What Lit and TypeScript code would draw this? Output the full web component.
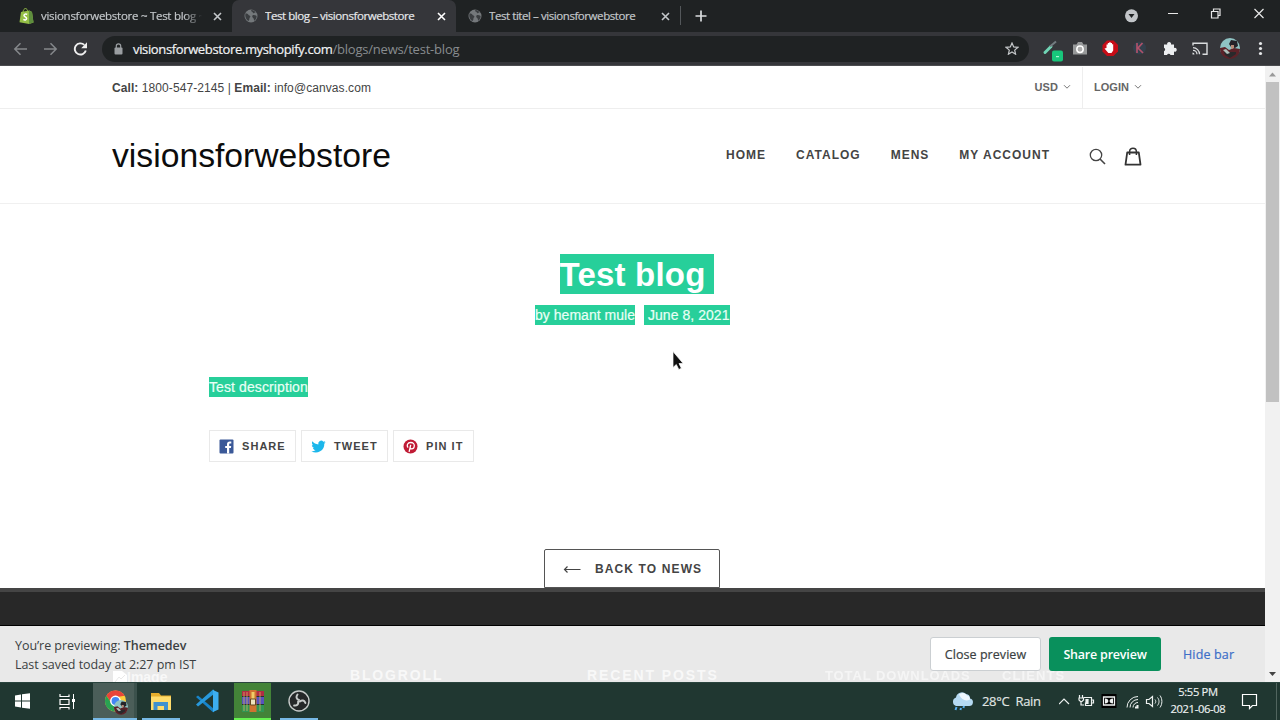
import { LitElement, html, css, svg } from "lit";
import { customElement } from "lit/decorators.js";

const globe = html`<svg class="ico" width="14" height="14" viewBox="0 0 14 14"><circle cx="7" cy="7" r="6.5" fill="#74787b"/><path d="M1.6 4.2c1.2.6 2.4.3 2.8 1.5.4 1.1 1.9.5 2 1.8.1 1-1.1 1.2-1 2.3.1.8-.4 1.5-.9 2.2C1.800 10.700.7 7.200 1.600 4.200zM7.500 1c-.8.8-.3 1.600.6 1.700.9.1.5 1.400 1.400 1.500 1 .1 1.200-.8 2.200-.6C10.700 2 9.300 1 7.500 1zM8.500 6.500c1.200-.8 2.700-.2 4.100.5.1 2-1 3.800-2.500 4.800-.2-1.200-.1-2-1-2.800-.8-.6-1.200-1.800-.6-2.500z" fill="#3a3d40"/></svg>`;
const close = (c: string) => html`<svg class="ico" width="9" height="9" viewBox="0 0 9 9"><path d="M1 1l7 7M8 1l-7 7" stroke=${c} stroke-width="1.6" fill="none"/></svg>`;
const chevron = html`<svg width="8" height="6" viewBox="0 0 8 6"><path d="M1 1.200l3 3 3-3" stroke="#777" fill="none"/></svg>`;
const avatar = svg`<circle cx="10" cy="10" r="10" fill="#8fc4c4"/><path d="M0 10l5-1 4 3 5-2 6 1a10 10 0 0 1-20 0z" fill="#5b2228"/><path d="M9 6l2-4 6 1 1 5-3 2-4-1z" fill="#252329"/><path d="M11 7h3v3l-3 1z" fill="#b98b78"/><path d="M4 14h12v2l-6 4-5-3z" fill="#29292b"/><path d="M3 12l4 4 3-1-4-4z" fill="#aebfb9"/>`;

@customElement("browser-chrome")
class BrowserChrome extends LitElement {
  static styles = css`
    :host { display: block; width: 1280px; font-family: "Open Sans", "Noto Sans", sans-serif; }
    svg { display: block; flex: none; }
    .tabs { height: 32px; background: #1f2223; display: flex; color: #c3c7ca; font-size: 11.5px; }
    .tab { display: flex; align-items: center; height: 32px; box-sizing: border-box; white-space: nowrap; }
    .first { width: 232px; padding-left: 19px; }
    .active { width: 224px; padding-left: 12px; background: #35363a; color: #e6e8ea; border-radius: 7px 7px 0 0; }
    .third { width: 224px; padding-left: 12px; }
    .label { margin-left: 7px; width: 163px; overflow: hidden; letter-spacing: -0.43px; -webkit-text-stroke: 0.2px; padding-bottom: 1px; }
    .active .label { width: 158px; }
    .active .ico:last-child { margin-left: 14px; }
    .third .label { width: 158px; }
    .third .ico:last-child { margin-left: 14px; }
    .fade { -webkit-mask-image: linear-gradient(90deg, #000 88%, transparent 99%); }
    .first .label { letter-spacing: -0.27px; }
    .first .ico:last-child { margin-left: 9px; }
    .sep { width: 1px; height: 19px; margin: 6px 14px 0 0; background: #53575a; }
    .plus { margin-top: 10px; }
    .win { margin-left: auto; display: flex; }
    .bar { height: 34px; background: #35363a; display: flex; align-items: center; border-bottom: 1px solid #4b4c4f; box-sizing: border-box; }
    .nav { width: 102px; display: flex; gap: 15px; padding-left: 13px; box-sizing: border-box; }
    .pill { width: 927px; height: 26px; border-radius: 13px; background: #1f2223; display: flex; align-items: center; font-size: 13px; color: #888c8f; padding: 0 10px 0 12px; box-sizing: border-box; }
    .url { margin-left: 10px; letter-spacing: -0.2px; flex: 1; white-space: nowrap; }
    .url b { font-weight: 400; color: #f1f2f3; -webkit-text-stroke: 0.2px; letter-spacing: -0.36px; }
    .ext { flex: 1; }
  `;
  render() {
    return html`
      <div class="tabs">
        <div class="tab first">
          <svg class="ico" width="15" height="16" viewBox="0 0 15 16"><path d="M2 4l8.500-1.500L13 4l1.500 10.500L10 16 .5 14.300z" fill="#95bf47"/><path d="M10 2.500L13 4l1.500 10.500L10 16z" fill="#5e8e3e"/><path d="M4 4c.3-2.200 1.400-3.500 2.500-3.500S8.500 1.800 8.600 3.500" stroke="#95bf47" fill="none"/><path d="M8.200 6.400C6.800 5.700 5 6 5 7.400c0 1.500 2.600 1.500 2.600 3.200 0 1.400-1.800 1.800-3.200.8" stroke="#fff" stroke-width="1.500" fill="none"/></svg>
          <span class="label fade">visionsforwebstore ~ Test blog ~</span>${close("#c3c7ca")}
        </div>
        <div class="tab active">${globe}<span class="label">Test blog – visionsforwebstore</span>${close("#fff")}</div>
        <div class="tab third">${globe}<span class="label">Test titel – visionsforwebstore</span>${close("#c3c7ca")}</div>
        <div class="sep"></div>
        <svg class="plus" width="12" height="12" viewBox="0 0 12 12"><path d="M6 .5v11M.5 6h11" stroke="#dadcde" stroke-width="1.700"/></svg>
        <svg class="win" width="156" height="32" viewBox="0 0 156 32" fill="none">
          <circle cx="7.500" cy="15.800" r="6.500" fill="#c2c5c8"/><path d="M4.500 14h6l-3 4z" fill="#1f2223"/>
          <path d="M44 13.500h10" stroke="#e8e8e8"/>
          <path d="M87.500 11.500h6.500v6.500h-6.500zM89.500 11.500v-2.500h6.500v6.500h-2" stroke="#e8e8e8" stroke-width="1.200"/>
          <path d="M130.500 9l9 9M139.500 9l-9 9" stroke="#e8e8e8" stroke-width="1.200"/>
        </svg>
      </div>
      <div class="bar">
        <div class="nav">
          <svg width="15" height="14" viewBox="0 0 15 14"><path d="M14 7H2M7.500 1.300L1.800 7l5.700 5.700" stroke="#85888b" stroke-width="1.500" fill="none"/></svg>
          <svg width="15" height="14" viewBox="0 0 15 14"><path d="M1 7h12M7.500 1.300L13.200 7l-5.700 5.700" stroke="#85888b" stroke-width="1.500" fill="none"/></svg>
          <svg width="15" height="14" viewBox="0 0 15 14"><path d="M12.800 8.500A5.600 5.600 0 1 1 11.300 2.900" stroke="#f0f0f0" stroke-width="1.900" fill="none"/><path d="M14 .3v6H8.200z" fill="#f0f0f0"/></svg>
        </div>
        <div class="pill">
          <svg width="9" height="12" viewBox="0 0 9 12"><rect x=".5" y="4.500" width="8" height="7" rx="1" fill="#9a9ea1"/><path d="M2.300 5V3a2.200 2.200 0 0 1 4.400 0v2" stroke="#9a9ea1" stroke-width="1.200" fill="none"/></svg>
          <span class="url"><b>visionsforwebstore.myshopify.com</b>/blogs/news/test-blog</span>
          <svg width="14" height="13" viewBox="0 0 14 13"><path d="M7 1l1.700 3.900 4.200.4-3.200 2.800.9 4.100L7 10l-3.600 2.200.9-4.100L1.100 5.300l4.200-.4z" stroke="#c5c8ca" stroke-width="1.200" fill="none"/></svg>
        </div>
        <svg class="ext" width="251" height="33" viewBox="0 0 251 33" preserveAspectRatio="xMinYMid">
          <path d="M16 20.500l6-6" stroke="#70d5b5" stroke-width="3" stroke-linecap="round"/><path d="M21 14.500l6-5" stroke="#737b80" stroke-width="2"/>
          <rect x="23" y="18.500" width="11" height="11" rx="2" fill="#18c67b"/><path d="M27 24.700h3" stroke="#caffe5"/>
          <path d="M44 12.500h3.500l1.500-2.500h4l1.500 2.500H58v10H44z" fill="#97999a"/><circle cx="51" cy="17.300" r="3.200" fill="#ababab" stroke="#fff" stroke-width="1.500"/>
          <path d="M78 8.500h6.500l4.500 4.500v6.500l-4.500 4.500H78l-4.500-4.500V13z" fill="#c70d17"/><path d="M77.500 16v-3.500h1.300V11h1.400v-.8h1.500v.8h1.300v1.200h1.200v6.300L82.500 21h-3.200l-3.800-4.500z" fill="#fff"/>
          <circle cx="110.500" cy="16" r="6.500" fill="#33404c"/><path d="M108 11v10M113.500 11l-4.500 5 5 5" stroke="#b0516a" stroke-width="1.700" fill="none"/>
          <path d="M135 12.500h3.200a2 2 0 1 1 3.800 0h3v3.400a2 2 0 1 1 0 3.700V23h-3.500a1.900 1.900 0 0 0-3.500 0h-3v-3.700a1.900 1.900 0 0 0 0-3.500z" fill="#eceef0"/>
          <path d="M164 13.500v-2.200h14v11h-4.500" stroke="#dadcde" stroke-width="1.400" fill="none"/><path d="M164 15.700a6.500 6.500 0 0 1 6.500 6.500M164 18.300a4 4 0 0 1 4 4" stroke="#dadcde" stroke-width="1.300" fill="none"/><path d="M163.500 20.500v2h2a2 2 0 0 0-2-2z" fill="#dadcde"/>
          <g transform="translate(191 6)">${avatar}</g>
          <g fill="#e5e7e9"><circle cx="231.500" cy="11.500" r="1.600"/><circle cx="231.500" cy="16.500" r="1.600"/><circle cx="231.500" cy="21.500" r="1.600"/></g>
        </svg>
      </div>`;
  }
}

@customElement("store-page")
class StorePage extends LitElement {
  static styles = css`
    :host { display: flex; height: 616px; width: 1280px; background: #fff; font-family: "Liberation Sans", Arial, sans-serif; color: #444; }
    svg { display: block; flex: none; }
    .page { width: 1265px; display: flex; flex-direction: column; }
    .top { height: 43px; padding: 1px 123px 0 112px; border-bottom: 1px solid #eee; box-sizing: border-box; display: flex; align-items: center; justify-content: space-between; font-size: 12px; letter-spacing: 0.08px; }
    .menus { display: flex; align-self: stretch; font: bold 11px "Liberation Sans", Arial, sans-serif; color: #666; letter-spacing: 0.05px; }
    .menus span { display: flex; align-items: center; gap: 5px; padding-bottom: 1px; }
    .menus span:first-child { padding-right: 11px; border-right: 1px solid #eee; margin-right: 11px; }
    .head { height: 95px; padding: 0 123px 0 112px; border-bottom: 1px solid #f0f0f0; box-sizing: border-box; display: flex; align-items: center; }
    .logo { font-size: 33.7px; color: #0c0c0c; flex: 1; padding-bottom: 2px; }
    .links { display: flex; gap: 30px; font-size: 12px; font-weight: bold; letter-spacing: 1px; padding-bottom: 2px; }
    .icons { display: flex; gap: 18px; align-items: center; margin: 1px 0 0 39px; }
    .main { flex: 1; display: flex; flex-direction: column; }
    .title { margin: 50px 0 0 559.5px; width: 154.5px; height: 40px; line-height: 41px; background: #27cf9a; color: #fff; font-weight: bold; font-size: 33px; letter-spacing: 0.2px; white-space: pre; }
    .meta { margin: 11px 0 0 535px; display: flex; gap: 9px; }
    .sel { background: #27cf9a; color: #e9fff6; font-size: 14px; height: 20px; line-height: 20px; white-space: pre; -webkit-text-stroke: 0.2px; }
    .by { width: 100px; letter-spacing: 0.03px; }
    .date { width: 86px; letter-spacing: 0.05px; }
    .desc { margin: 52px 0 0 209px; width: 99px; letter-spacing: 0.1px; }
    .shares { display: flex; gap: 5px; margin: 33px 0 0 209px; }
    .share { height: 32px; box-sizing: border-box; border: 1px solid #e9e9e9; display: flex; align-items: center; padding-left: 9px; gap: 8px; font-weight: bold; font-size: 11px; letter-spacing: 1.05px; }
    .w87 { width: 87px; } .w81 { width: 81px; }
    .back { margin: 87px 0 0 544px; width: 176px; height: 39px; border: 1px solid #555; border-radius: 2px 2px 0 0; box-sizing: border-box; display: flex; align-items: center; gap: 14px; padding: 1px 0 0 18px; font-size: 12px; font-weight: bold; letter-spacing: 1.12px; }
    .foot { height: 38px; box-sizing: border-box; border-top: 4px solid #454545; border-bottom: 1px solid #000; background: #282828; }
    .preview { height: 56px; background: #e9e9e9; display: flex; align-items: center; padding: 0 30px 0 15px; position: relative; font-family: "Open Sans", "Noto Sans", sans-serif; font-size: 12.5px; color: #3b3f42; box-sizing: border-box; }
    .note { flex: 1; line-height: 19px; letter-spacing: -0.05px; padding-top: 2px; }
    .note b, .green { font-weight: 600; }
    .ghost { position: absolute; left: 0; right: 0; bottom: 0; height: 16px; overflow: hidden; font: bold 14px/19px "Liberation Sans", Arial, sans-serif; color: #f8f8f8; display: flex; white-space: nowrap; }
    .ghost span { flex: none; box-sizing: border-box; }
    .img { padding: 4px 0 0 113px; width: 350px; display: flex; line-height: 15px; }
    .blog { width: 237px; letter-spacing: 1.85px; } .recent { width: 238px; letter-spacing: 1.9px; }
    .total { width: 177px; font-size: 13px; letter-spacing: 0.9px; opacity: .8; } .clients { font-size: 13px; letter-spacing: 1.1px; opacity: .8; }
    .btn { height: 34px; box-sizing: border-box; display: flex; align-items: center; justify-content: center; border-radius: 3px; letter-spacing: -0.2px; z-index: 1; white-space: nowrap; }
    .white { width: 111px; background: #fff; border: 1px solid #cbcfd2; margin-right: 8px; -webkit-text-stroke: 0.2px; letter-spacing: 0.05px; }
    .green { width: 112px; background: #09905c; color: #fff; }
    .hide { color: #3d6fc8; margin-left: 22px; width: 52px; justify-content: flex-start; -webkit-text-stroke: 0.2px; letter-spacing: 0.15px; }
    .scroll { width: 15px; background: #f1f1f1; display: flex; flex-direction: column; align-items: center; }
    .up { margin: 6px 0 5px; }
    .thumb { width: 13px; height: 320px; background: #c1c1c1; }
    .down { margin: auto 0 6px; }
    .cursor { position: absolute; left: 672px; top: 350px; }
  `;
  render() {
    return html`
      <div class="page">
        <div class="top">
          <span><b>Call:</b> 1800-547-2145 | <b>Email:</b> info@canvas.com</span>
          <div class="menus"><span>USD ${chevron}</span><span>LOGIN ${chevron}</span></div>
        </div>
        <div class="head">
          <div class="logo">visionsforwebstore</div>
          <div class="links"><span>HOME</span><span>CATALOG</span><span>MENS</span><span>MY ACCOUNT</span></div>
          <div class="icons">
            <svg width="17" height="17" viewBox="0 0 17 17"><circle cx="7" cy="7" r="5.700" stroke="#444" stroke-width="1.300" fill="none"/><path d="M11 11l5 5" stroke="#444" stroke-width="1.600"/></svg>
            <svg width="18" height="19" viewBox="0 0 18 19"><path d="M3.200 5.500h11.600l1.700 12.200H1.500z" stroke="#333" stroke-width="1.800" stroke-linejoin="round" fill="none"/><path d="M5.600 8V4.700C5.600 2.500 7 1.200 9 1.200s3.400 1.300 3.400 3.500V8" stroke="#333" stroke-width="1.500" fill="none"/></svg>
          </div>
        </div>
        <div class="main">
          <div class="title">Test blog </div>
          <div class="meta"><span class="sel by">by hemant mule</span><span class="sel date"> June 8, 2021</span></div>
          <div class="sel desc">Test description</div>
          <div class="shares">
            <div class="share w87"><svg width="15" height="15" viewBox="0 0 15 15"><rect x=".5" y=".5" width="14" height="14" rx="1" fill="#3b5998"/><path d="M8 14.500V9H6.200V6.900H8V5.300c0-1.900 1.100-2.800 2.700-2.800l1.600.1v1.900h-1.100c-.9 0-1 .4-1 1v1.400h2L11.900 9h-1.700v5.500z" fill="#fff"/></svg>SHARE</div>
            <div class="share w87"><svg width="15" height="15" viewBox="0 0 20 20"><path fill="#1cb7eb" d="M19.500 4.200c-.7.300-1.400.5-2.200.6.800-.5 1.400-1.200 1.700-2.100-.7.400-1.600.8-2.500.9A3.900 3.900 0 0 0 9.800 7.200C6.600 7 3.700 5.500 1.800 3.100c-1 1.800-.5 4.100 1.200 5.300-.6 0-1.200-.2-1.800-.5 0 1.900 1.300 3.500 3.100 3.900-.6.200-1.200.2-1.800.1.500 1.600 2 2.700 3.700 2.700A8 8 0 0 1 .5 16.200 11.200 11.200 0 0 0 17.700 6.200c.7-.6 1.300-1.200 1.800-2z"/></svg>TWEET</div>
            <div class="share w81"><svg width="15" height="15" viewBox="0 0 15 15"><circle cx="7.500" cy="7.500" r="7" fill="#c01b35"/><path d="M5 8.700C3.300 6.500 4.500 3.500 7.800 3.500c2.200 0 3.500 1.400 3.500 3 0 2-1.200 3.400-2.700 3.400-.8 0-1.300-.4-1.400-.9M7.700 5.900l-1.600 7" stroke="#fff" stroke-width="1.300" fill="none"/></svg>PIN IT</div>
          </div>
          <div class="back"><svg width="18" height="8" viewBox="0 0 18 8"><path d="M17.500 4.500H1.500M4.500 1.500l-3 3 3 3" stroke="#444" stroke-width="1.200" fill="none"/></svg>BACK TO NEWS</div>
        </div>
        <div class="foot"></div>
        <div class="preview">
          <div class="ghost"><span class="img"><svg width="14" height="14" viewBox="0 0 14 14"><path d="M0 1h9l5 4v9H0z" fill="#fff"/><path d="M2 12l4-5 2 2 4-4" stroke="#e9e9e9" fill="none"/></svg>Image</span><span class="blog">BLOGROLL</span><span class="recent">RECENT POSTS</span><span class="total">TOTAL DOWNLOADS</span><span class="clients">CLIENTS</span></div>
          <div class="note">You’re previewing: <b>Themedev</b><br>Last saved today at 2:27 pm IST</div>
          <div class="btn white">Close preview</div><div class="btn green">Share preview</div><div class="btn hide">Hide bar</div>
        </div>
      </div>
      <div class="scroll">
        <svg class="up" width="7" height="5" viewBox="0 0 7 5"><path d="M0 4.500L3.500.5 7 4.500z" fill="#999"/></svg>
        <div class="thumb"></div>
        <svg class="down" width="7" height="4" viewBox="0 0 7 4"><path d="M0 0h7L3.500 4z" fill="#444"/></svg>
      </div>
      <svg class="cursor" width="14" height="22" viewBox="0 0 14 22"><path d="M1 1.500v16l3.300-3 2.500 5 2.600-1.200L7 13.500h4.200z" fill="#111" stroke="#fff" stroke-width=".7"/></svg>`;
  }
}

@customElement("task-bar")
class TaskBar extends LitElement {
  static styles = css`
    :host { display: flex; width: 1280px; height: 38px; background: #203731; font-family: "Open Sans", "Noto Sans", sans-serif; color: #eef2f1; box-shadow: inset 0 1px #2a443e; }
    svg { display: block; flex: none; }
    .weather { margin-left: 3px; align-self: center; width: 86px; font-size: 13px; letter-spacing: -0.32px; white-space: pre; color: #e0e6e4; box-sizing: border-box; }
    .weather, .clock { -webkit-text-stroke: 0.15px; }
    .tray { margin-left: -4px; }
    .clock { margin-left: 2px; margin-right: 2px; font-size: 11.2px; line-height: 17px; text-align: center; width: 64px; padding-top: 1px; letter-spacing: -0.35px; white-space: nowrap; }
  `;
  render() {
    return html`
      <svg width="951" height="38" viewBox="0 0 951 38" fill="none">
        <path d="M15 13.500l6-1v6h-6zM22 12.300l8-1.100v7.300h-8zM15 19.500h6v6l-6-1zM22 19.500h8v7.300l-8-1.100z" fill="#fff"/>
        <path d="M60 14.500v-2.500M60 12.500v2h9v-2M60 17.500h9v5h-9zM60 27.500v-2h9v2" stroke="#fff" stroke-width="1.200"/><path d="M73.500 12v15" stroke="#fff"/><path d="M72 17h3v3h-3z" fill="#fff"/>
        <path d="M93 1h41v37H93z" fill="#4b5e59"/><path d="M134 1h3v37h-3z" fill="#3b514c"/><path d="M93 36h44v2H93zM142 36h38v2h-38zM280 36h38v2h-38z" fill="#77b9e6"/>
        <circle cx="115.500" cy="19" r="10.500" fill="#ffcf3d"/><path d="M106.400 13.700a10.500 10.500 0 0 1 18.200 0l-9.100 1.500-4 6z" fill="#e9443a"/><path d="M106.400 13.700a10.500 10.500 0 0 0 7.800 15.700l4-7.500-6.700-.7z" fill="#29a252"/><circle cx="115.500" cy="19" r="4.700" fill="#4285f4" stroke="#fff" stroke-width="1.500"/>
        <g transform="translate(114 18) scale(.7)">${avatar}</g>
        <path d="M151 11h8l2 2.500h10V28h-20z" fill="#e6ae2c"/><path d="M151 14.500h20V28h-20z" fill="#ffdc6c"/><path d="M153.500 28v-8h14.500v8h-4v-4h-6.500v4z" fill="#3f91ce"/>
        <path d="M196 15l2-1.500 16 13.500v3l-1 .3z" fill="#1784c9"/><path d="M196 22.500l2 2L214 12V8l-1-.5z" fill="#2899dc"/><path d="M213 8l5.500 2.500v17L213 30z" fill="#3caef0"/>
        <path d="M234 1h37v35h-37z" fill="#438338"/><path d="M234 36h37v2h-37z" fill="#67f251"/>
        <path d="M242 9h22v6h-22z" fill="#b12c43"/><path d="M242 15h22v8h-22z" fill="#5753bd"/><path d="M242 23h22v7h-22z" fill="#309653"/><path d="M242 14.500h22M242 22.500h22" stroke="#25352e"/><path d="M249.500 8h7v22h-7z" fill="#cf7331"/><path d="M251.500 10h3v8h-3z" fill="#efcd67"/><path d="M250.500 17h5v6h-5z" fill="#eee4be" stroke="#624822"/><path d="M244 10v19M247 10v19M260 10v19" stroke="#d5b35f" stroke-width=".8"/>
        <circle cx="299" cy="19" r="10" fill="#252829" stroke="#c6cac9" stroke-width="1.400"/>
        <g stroke="#c6cac9" stroke-width="2" stroke-linecap="round"><path d="M299 18c-2.800-1-3.200-3.300-1.500-5.500"/><path d="M299 18c-2.800-1-3.200-3.300-1.500-5.500" transform="rotate(120 299 19)"/><path d="M299 18c-2.800-1-3.200-3.300-1.500-5.500" transform="rotate(240 299 19)"/></g>
      </svg>
      <svg width="28" height="38" viewBox="952 0 28 38"><path d="M957 24a4.500 4.500 0 0 1 0-8.500 6 6 0 0 1 10-3.500 4.500 4.500 0 0 1 4 4.500 3.800 3.800 0 0 1-1 7.500z" fill="#b5d9f2"/><path d="M960 12.500a5 5 0 0 1 8 1c2 0 3 2 3 4-4 2-8 1-11-5z" fill="#eff8ff"/><path d="M957.500 25l-1 3M965 24l-.6 2M962 26l-.6 2" stroke="#55aef2" stroke-width="2"/></svg>
      <div class="weather">28°C  Rain</div>
      <svg class="tray" width="107" height="38" viewBox="1055 0 107 38" fill="none" stroke="#eef2f1" stroke-width="1.200">
        <path d="M1055 22l5-5 5 5"/>
        <path d="M1079.500 15.500h8v8h-6v-3M1088 18h1.500v3h-1.500M1075.500 13v3M1078.500 13v3M1075 16h4.500v2l-1.500 1.500h-1.500l-1.500-1.500zM1077 19v4h3"/><path d="M1082 17.500h2v4h-2z" fill="#eef2f1"/>
        <path d="M1097.500 12h15v14h-15z" fill="#000" stroke="none"/><path d="M1099.500 15h11v8h-11z" stroke-width="1.300"/><path d="M1101 16.500c4.500 0 4.500 5 0 5zM1109 16.500c-4.500 0-4.500 5 0 5z" fill="#eef2f1" stroke="none"/>
        <path d="M1123 25.500a11 11 0 0 1 11-11M1126 25.500a8 8 0 0 1 8-8M1129 25.500a5 5 0 0 1 5-5" stroke-width="1"/><path d="M1133.500 23v2.500h-2.500" stroke-width="2"/>
        <path d="M1142.500 17.500h2.500l3.500-3v10l-3.500-3h-2.500z"/><path d="M1151 17.500c1 1.300 1 2.700 0 4M1153.500 15.500c2 2.500 2 5.500 0 8M1156 13.500c2.500 3.500 2.500 8.500 0 12" stroke-width="1"/>
      </svg>
      <div class="clock">5:55 PM<br>2021-06-08</div>
      <svg width="50" height="38" viewBox="1230 0 50 38" fill="none"><path d="M1242.500 12.500h14v11h-4l-3 3v-3h-7z" stroke="#fff" stroke-width="1.200"/><path d="M1276.500 1v37" stroke="#51655f"/></svg>`;
  }
}

@customElement("app-root")
class AppRoot extends LitElement {
  static styles = css`:host { display: flex; flex-direction: column; width: 1280px; height: 720px; overflow: hidden; }`;
  render() {
    return html`<browser-chrome></browser-chrome><store-page></store-page><task-bar></task-bar>`;
  }
}
